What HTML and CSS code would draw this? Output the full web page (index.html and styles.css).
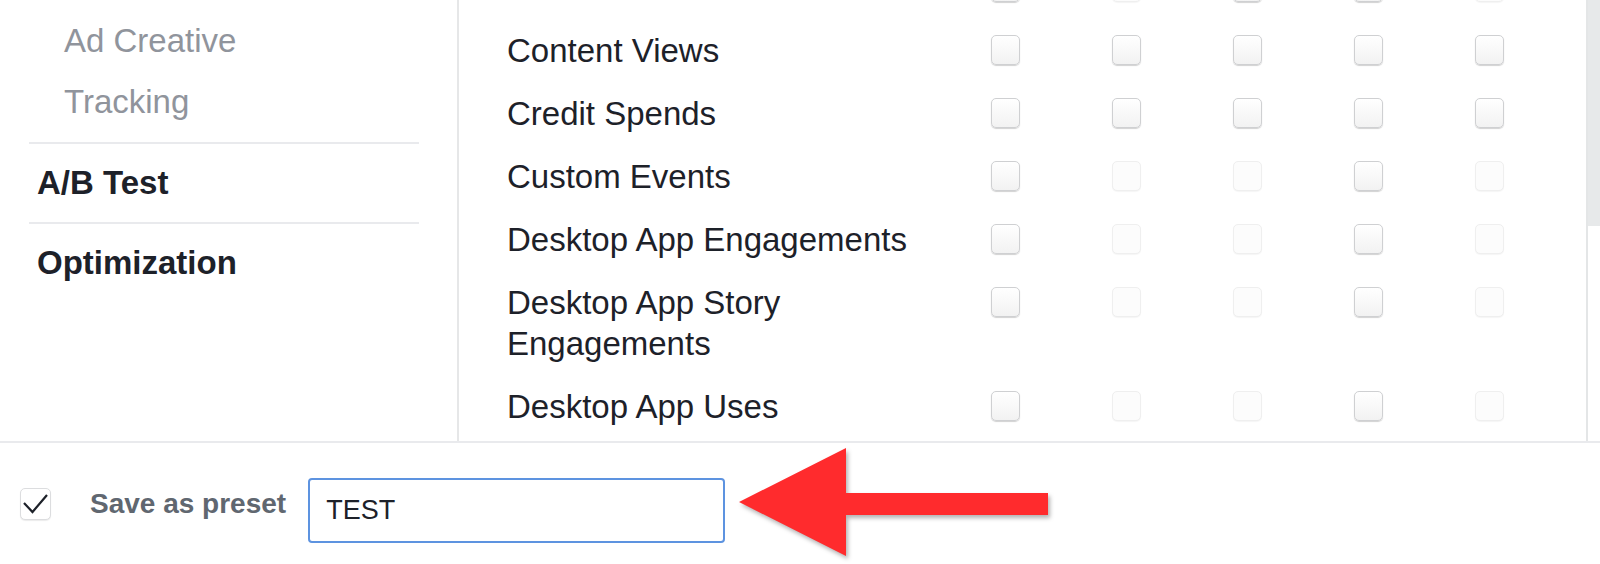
FILE: index.html
```html
<!DOCTYPE html>
<html lang="en">

<head>
    <meta charset="UTF-8">
    <meta name="viewport" content="width=device-width, initial-scale=1.0">
    <title>Customize Columns</title>
    <link rel="stylesheet" href="styles.css">
</head>

<body>
    <div class="picker">
        <!-- left navigation -->
        <div class="nav-pane">
            <ul class="nav">
                <li class="sub">Targeting</li>
                <li class="sub">Ad Creative</li>
                <li class="sub">Tracking</li>
                <li class="section">A/B Test</li>
                <li class="section">Optimization</li>
            </ul>
        </div>

        <!-- metrics list -->
        <div class="metrics-pane">
            <div class="metrics">
                <div class="row">
                    <div class="metric">Contacts</div>
                    <span class="cb"></span>
                    <span class="cb off"></span>
                    <span class="cb"></span>
                    <span class="cb"></span>
                    <span class="cb off"></span>
                </div>
                <div class="row">
                    <div class="metric">Content Views</div>
                    <span class="cb"></span>
                    <span class="cb"></span>
                    <span class="cb"></span>
                    <span class="cb"></span>
                    <span class="cb"></span>
                </div>
                <div class="row">
                    <div class="metric">Credit Spends</div>
                    <span class="cb"></span>
                    <span class="cb"></span>
                    <span class="cb"></span>
                    <span class="cb"></span>
                    <span class="cb"></span>
                </div>
                <div class="row">
                    <div class="metric">Custom Events</div>
                    <span class="cb"></span>
                    <span class="cb off"></span>
                    <span class="cb off"></span>
                    <span class="cb"></span>
                    <span class="cb off"></span>
                </div>
                <div class="row">
                    <div class="metric">Desktop App Engagements</div>
                    <span class="cb"></span>
                    <span class="cb off"></span>
                    <span class="cb off"></span>
                    <span class="cb"></span>
                    <span class="cb off"></span>
                </div>
                <div class="row">
                    <div class="metric">Desktop App Story Engagements</div>
                    <span class="cb"></span>
                    <span class="cb off"></span>
                    <span class="cb off"></span>
                    <span class="cb"></span>
                    <span class="cb off"></span>
                </div>
                <div class="row">
                    <div class="metric">Desktop App Uses</div>
                    <span class="cb"></span>
                    <span class="cb off"></span>
                    <span class="cb off"></span>
                    <span class="cb"></span>
                    <span class="cb off"></span>
                </div>
            </div>
        </div>

        <div class="scrollbar">
            <div class="thumb"></div>
        </div>
    </div>

    <!-- preset bar -->
    <div class="preset-bar">
        <span class="cb checked">
            <svg width="29" height="30" viewBox="0 0 29 30">
                <path d="M3 14 L11.5 23 L26 6" fill="none" stroke="#1d2129" stroke-width="2.2" />
            </svg>
        </span>
        <span class="preset-label">Save as preset</span>
        <input class="preset-name" type="text" value="TEST">
        <svg class="arrow" width="320" height="114" viewBox="0 0 320 114">
            <polygon points="4,55 111,1 111,46 313,46 313,68 111,68 111,109" fill="#ff2b2d" />
        </svg>
    </div>
</body>

</html>
```

FILE: styles.css
```css
body {
    font-family: "Liberation Sans", Arial, sans-serif;
    margin: 0;
    padding: 0;
    width: 1600px;
    height: 564px;
    overflow: hidden;
    background-color: #fff;
}

.picker {
    display: flex;
    height: 441px;
    border-bottom: 2px solid #e9eaed;
}

.nav-pane {
    width: 457px;
    border-right: 2px solid #e6e7e8;
    overflow: hidden;
}

.nav {
    list-style: none;
    margin: -51px 0 0 29px;
    padding: 0;
    width: 390px;
}

.nav .sub {
    padding-left: 35px;
    font-size: 33px;
    line-height: 61px;
    color: #90949c;
}

.nav .sub + .section {
    margin-top: 10px;
    border-top: 2px solid #e9eaed;
}

.nav .section {
    padding-left: 8px;
    font-size: 33px;
    font-weight: 700;
    line-height: 78px;
    color: #1d2129;
}

.nav .section + .section {
    border-top: 2px solid #e9eaed;
}

.metrics-pane {
    flex: 1;
    overflow: hidden;
}

.metrics {
    margin-top: -44px;
    padding-left: 48px;
}

.row {
    display: grid;
    grid-template-columns: 438px repeat(5, 121px);
    align-items: start;
    padding: 11px 0;
}

.metric {
    font-size: 33px;
    line-height: 41px;
    color: #1d2129;
}

.cb {
    display: block;
    box-sizing: border-box;
    width: 29px;
    height: 30px;
    margin-top: 5px;
    justify-self: center;
    border: 1px solid #cfd0d2;
    border-radius: 5px;
    background: linear-gradient(#ffffff, #f2f2f2);
    box-shadow: 0 1px 1px rgba(0, 0, 0, 0.18);
}

.cb.off {
    border-color: #efefef;
    background: #fcfcfc;
    box-shadow: 0 1px 1px rgba(0, 0, 0, 0.04);
}

.scrollbar {
    width: 12px;
    border-left: 2px solid #e4e6e7;
}

.thumb {
    height: 226px;
    background-color: #e7e9ea;
}

.preset-bar {
    display: flex;
    align-items: center;
    height: 121px;
    padding-left: 20px;
}

.cb.checked {
    width: 31px;
    height: 32px;
    margin-top: 0;
    border-color: #dcdddf;
    background: #fff;
    box-shadow: 0 1px 1px rgba(0, 0, 0, 0.08);
}

.cb.checked svg {
    display: block;
}

.preset-label {
    margin-left: 39px;
    font-size: 28px;
    font-weight: 700;
    color: #606770;
}

.preset-name {
    box-sizing: border-box;
    width: 417px;
    height: 65px;
    margin: 14px 0 0 22px;
    padding: 0 16px;
    border: 2px solid #5d93e0;
    border-radius: 4px;
    outline: none;
    font-family: "Liberation Sans", Arial, sans-serif;
    font-size: 27px;
    color: #1d2129;
}

.arrow {
    margin-left: 10px;
    overflow: visible;
    filter: drop-shadow(2px 3px 2px rgba(0, 0, 0, 0.3));
}
```
